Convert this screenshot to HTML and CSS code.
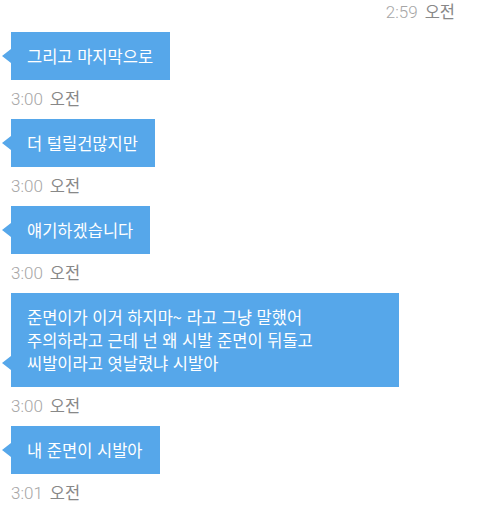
FILE: index.html
```html
<!DOCTYPE html>
<html lang="ko">
<head>
<meta charset="utf-8">
<link rel="stylesheet" href="styles.css">
</head>
<body>
<div class="chat">
  <div class="time time--top"><span class="num">2:59</span> <span class="ampm">오전</span></div>

  <div class="msg">
    <div class="bubble">그리고 마지막으로</div>
    <div class="time"><span class="num">3:00</span> <span class="ampm">오전</span></div>
  </div>

  <div class="msg">
    <div class="bubble">더 털릴건많지만</div>
    <div class="time"><span class="num">3:00</span> <span class="ampm">오전</span></div>
  </div>

  <div class="msg">
    <div class="bubble">얘기하겠습니다</div>
    <div class="time"><span class="num">3:00</span> <span class="ampm">오전</span></div>
  </div>

  <div class="msg">
    <div class="bubble bubble--full">준면이가 이거 하지마~ 라고 그냥 말했어<br>주의하라고 근데 넌 왜 시발 준면이 뒤돌고<br>씨발이라고 엿날렸냐 시발아</div>
    <div class="time"><span class="num">3:00</span> <span class="ampm">오전</span></div>
  </div>

  <div class="msg">
    <div class="bubble">내 준면이 시발아</div>
    <div class="time"><span class="num">3:01</span> <span class="ampm">오전</span></div>
  </div>
</div>
</body>
</html>
```
FILE: styles.css
```css
html, body {
  margin: 0;
  padding: 0;
  background: #ffffff;
}

.chat {
  width: 480px;
  height: 508px;
  overflow: hidden;
  display: flex;
  flex-direction: column;
}

.time {
  display: flex;
  align-items: baseline;
  gap: 7px;
  height: 22px;
  line-height: 22px;
  white-space: nowrap;
}

.time .num {
  font-family: Roboto, "Liberation Sans", sans-serif;
  font-size: 17px;
  font-weight: 300;
  color: #a6a6a6;
}

.time .ampm {
  font-family: "Noto Sans CJK KR", "Noto Sans", sans-serif;
  font-size: 16.5px;
  color: #888888;
}

.time--top {
  align-self: flex-end;
  margin-right: 25px;
  margin-bottom: 10px;
}

.msg {
  display: flex;
  flex-direction: column;
  align-items: flex-start;
  padding-left: 11px;
}

.msg .time {
  margin-top: 7px;
  margin-bottom: 10px;
}

.bubble {
  position: relative;
  background: #56a7ea;
  color: #ffffff;
  font-family: "Noto Sans CJK KR", "Noto Sans", sans-serif;
  font-size: 16.5px;
  line-height: 23px;
  padding: 13px 17px 12px 16px;
}

.bubble::before {
  content: "";
  position: absolute;
  left: -9px;
  bottom: 17px;
  border-right: 9px solid #56a7ea;
  border-top: 7px solid transparent;
  border-bottom: 7px solid transparent;
}

.bubble--full {
  width: 388px;
  box-sizing: border-box;
}
```
